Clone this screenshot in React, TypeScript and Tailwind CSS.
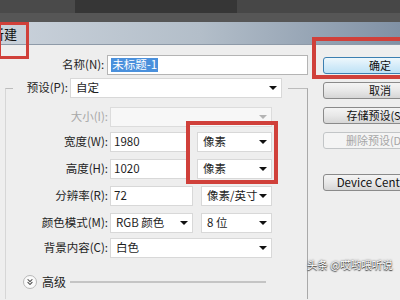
import { ChevronsDown } from "lucide-react";

function Arrow({ grey }: { grey?: boolean }) {
  return (
    <span
      className={`ml-auto mr-[4px] h-0 w-0 border-x-[4px] border-t-[4px] border-x-transparent ${
        grey ? "border-t-[#b4b4b4]" : "border-t-[#111]"
      }`}
    />
  );
}

function Select({ value, className = "" }: { value: string; className?: string }) {
  return (
    <div className={`flex h-5 shrink-0 items-center border border-[#d8d8d8] bg-white pl-[5px] ${className}`}>
      <span>{value}</span>
      <Arrow />
    </div>
  );
}

function Field({ value, className = "" }: { value: string; className?: string }) {
  return (
    <div className={`flex h-5 shrink-0 items-center border border-[#d8d8d8] bg-white pl-[3px] ${className}`}>
      {value}
    </div>
  );
}

function Button({
  children,
  kind = "normal",
  className = "",
}: {
  children: React.ReactNode;
  kind?: "default" | "normal" | "disabled";
  className?: string;
}) {
  const look =
    kind === "default"
      ? "border-[#3c7fb1] bg-[linear-gradient(#eef7fc,#d5ecf9_50%,#bfe2f6)] text-[#111]"
      : kind === "disabled"
        ? "border-[#c2c5c7] bg-[#f4f4f4] text-[#a6a6a6]"
        : "border-[#8a8a8a] bg-[linear-gradient(#f4f4f4,#e8e8e8_50%,#d6d6d6)] text-[#111]";
  return (
    <div
      className={`flex h-[17px] w-[114px] shrink-0 items-center justify-center whitespace-nowrap rounded-[3px] border ${look} ${className}`}
    >
      {children}
    </div>
  );
}

export default function App() {
  return (
    <div className="relative h-[300px] w-[400px] overflow-hidden bg-[#eeeeee] font-['Noto_Sans_CJK_SC',sans-serif] text-[11.5px] leading-none text-[#1e1e1e]">
      {/* desktop behind the dialog */}
      <div className="flex h-[22px] flex-col">
        <div className="flex h-[13px]">
          <div className="w-[75px] bg-[#4a4a4a]" />
          <div className="w-[162px] bg-[#363636]" />
          <div className="flex-1 bg-[#474747]" />
        </div>
        <div className="flex-1 bg-[#565656]" />
      </div>

      {/* title bar */}
      <div className="flex h-[23px] items-center border-b border-[#8e9aa8] bg-[linear-gradient(to_right,#cad2db,#b3bec9_50%,#8091a5)]">
        <span className="-ml-[9px] text-[13px] text-[#111]">新建</span>
      </div>

      <div className="flex h-[254px]">
        {/* form */}
        <div className="flex w-[308px] shrink-0 flex-col">
          <div className="mt-[10px] flex h-5 items-center">
            <span className="w-[106px] pr-[1px] text-right">名称(N):</span>
            <div className="ml-[2px] flex h-5 w-[202px] items-center border border-[#b4b4b4] bg-white pl-[3px]">
              <span className="bg-[#4a90dc] px-[1px] py-[1px] text-white">未标题-1</span>
            </div>
          </div>

          <div className="ml-[5px] mt-[13px] flex w-[303px] flex-1 flex-col border-x border-t border-l-[#d6d6d6] border-r-[#a9a9a9] border-t-[#bcbcbc]">
            <div className="-mt-[11px] flex h-5 items-center">
              <span className="w-[7px]" />
              <span className="flex h-5 w-[57px] items-center justify-end bg-[#eeeeee] pr-[2px]">预设(P):</span>
              <Select value="自定" className="w-[212px]" />
              <span className="h-5 w-[6px] bg-[#eeeeee]" />
            </div>

            <div className="mt-[9px] flex h-5 items-center">
              <span className="w-[102px] text-right text-[#a8a8a8]">大小(I):</span>
              <div className="ml-[2px] flex h-5 w-[162px] items-center border border-[#dcdcdc] bg-[#f7f7f7]">
                <Arrow grey />
              </div>
            </div>

            <div className="mt-[5px] flex h-5 items-center">
              <span className="w-[102px] text-right">宽度(W):</span>
              <Field value="1980" className="ml-[2px] w-[77px]" />
              <Select value="像素" className="ml-[10px] w-[75px]" />
            </div>

            <div className="mt-[7px] flex h-5 items-center">
              <span className="w-[102px] text-right">高度(H):</span>
              <Field value="1020" className="ml-[2px] w-[77px]" />
              <Select value="像素" className="ml-[10px] w-[75px]" />
            </div>

            <div className="mt-[7px] flex h-5 items-center">
              <span className="w-[102px] text-right">分辨率(R):</span>
              <Field value="72" className="ml-[2px] w-[83px]" />
              <Select value="像素/英寸" className="ml-[8px] w-[71px]" />
            </div>

            <div className="mt-[7px] flex h-5 items-center">
              <span className="w-[102px] text-right">颜色模式(M):</span>
              <Select value="RGB 颜色" className="ml-[2px] w-[83px]" />
              <Select value="8 位" className="ml-[8px] w-[71px]" />
            </div>

            <div className="mt-[5px] flex h-5 items-center">
              <span className="w-[102px] text-right">背景内容(C):</span>
              <Select value="白色" className="ml-[2px] w-[162px]" />
            </div>

            <div className="mt-[15px] flex h-[18px] items-center">
              <span className="ml-[17px] flex h-[14px] w-[14px] items-center justify-center rounded-full border border-[#b8b8b8] bg-[#fafafa]">
                <ChevronsDown size={10} strokeWidth={2.5} className="text-[#444]" />
              </span>
              <span className="ml-[5px] text-[12px]">高级</span>
              <span className="ml-[4px] h-[2px] w-[196px] bg-[#c4c4c4]" />
            </div>
          </div>
        </div>

        {/* buttons */}
        <div className="flex flex-1 flex-col pl-[15px] text-[11px]">
          <Button kind="default" className="mt-[12px]">确定</Button>
          <Button className="mt-[8px]">取消</Button>
          <Button className="mt-[8px]">存储预设(S)...</Button>
          <Button kind="disabled" className="mt-[8px]">删除预设(D)...</Button>
          <Button className="mt-[25px] text-[11.5px]">Device Central...</Button>
        </div>
      </div>

      {/* red annotation boxes */}
      <div className="absolute left-[-2px] top-[22px] h-[37px] w-[31px] border-[3px] border-[#d0403a]" />
      <div className="absolute left-[312px] top-[37px] h-[42px] w-[100px] border-[4px] border-[#d0403a]" />
      <div className="absolute left-[186px] top-[121px] h-[63px] w-[92px] border-[4px] border-[#d0403a]" />

      {/* watermark */}
      <div className="absolute left-[307px] top-[260px] text-[10.5px] text-white [text-shadow:0_0_2px_#333,0_1px_1px_#333]">
        头条 @哎哟喂听说
      </div>
    </div>
  );
}
